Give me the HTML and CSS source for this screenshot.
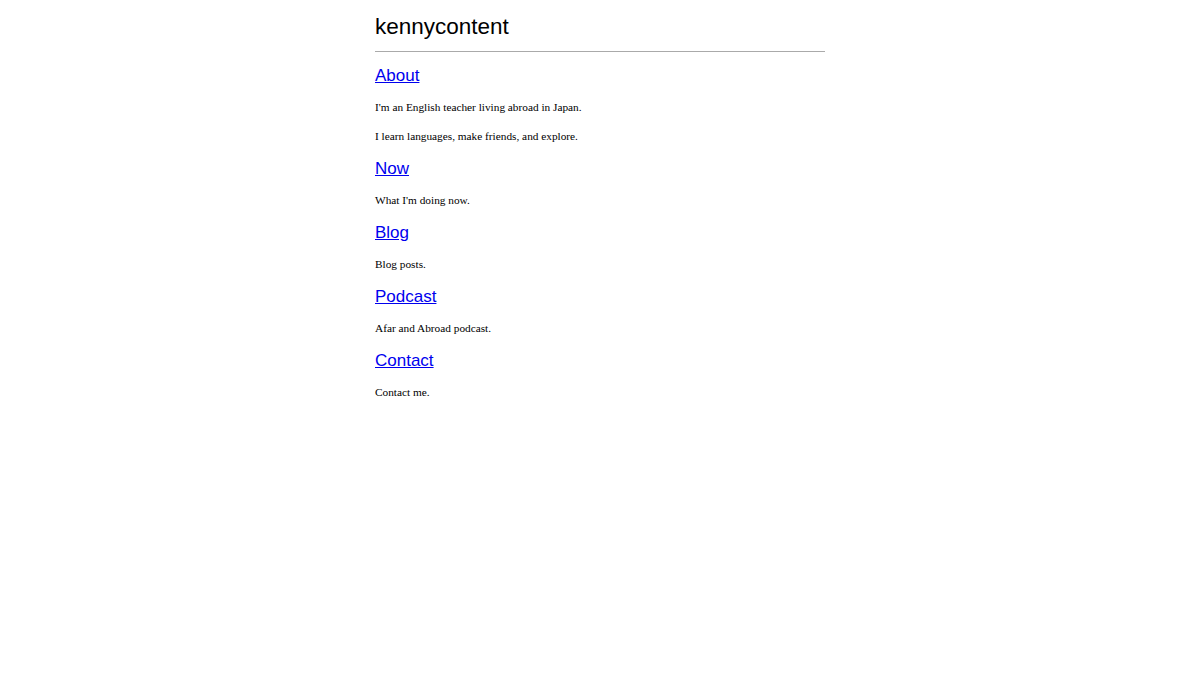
FILE: index.html
```html
<!DOCTYPE html>
<html>
<head>
<meta charset="utf-8">
<title>kennycontent</title>
<link rel="stylesheet" href="styles.css">
</head>
<body>
<main class="page">
  <header class="site-header">
    <h1 class="site-title">kennycontent</h1>
  </header>
  <section class="entry">
    <h2 class="entry-title"><a href="#">About</a></h2>
    <p class="entry-text">I'm an English teacher living abroad in Japan.</p>
    <p class="entry-text">I learn languages, make friends, and explore.</p>
  </section>
  <section class="entry">
    <h2 class="entry-title"><a href="#">Now</a></h2>
    <p class="entry-text">What I'm doing now.</p>
  </section>
  <section class="entry">
    <h2 class="entry-title"><a href="#">Blog</a></h2>
    <p class="entry-text">Blog posts.</p>
  </section>
  <section class="entry">
    <h2 class="entry-title"><a href="#">Podcast</a></h2>
    <p class="entry-text">Afar and Abroad podcast.</p>
  </section>
  <section class="entry">
    <h2 class="entry-title"><a href="#">Contact</a></h2>
    <p class="entry-text">Contact me.</p>
  </section>
</main>
</body>
</html>
```
FILE: styles.css
```css
html, body {
  margin: 0;
  padding: 0;
  background: #ffffff;
}
.page {
  width: 450px;
  margin: 0 auto;
  padding-top: 13px;
  font-family: "Liberation Serif", "Times New Roman", serif;
  color: #000;
}
.site-header {
  border-bottom: 1px solid #aaaaaa;
  padding-bottom: 10px;
}
.site-title {
  margin: 0;
  font-family: "Liberation Sans", Arial, sans-serif;
  font-size: 22.5px;
  font-weight: normal;
  line-height: 28px;
}
.entry-title {
  margin: 13px 0 14px;
  font-family: "Liberation Sans", Arial, sans-serif;
  font-size: 17px;
  font-weight: normal;
  line-height: 21px;
}
.entry-title a {
  color: #0000ee;
  text-decoration: underline;
}
.entry-text {
  margin: 14px 0;
  font-size: 11.3px;
  line-height: 15px;
}
```
